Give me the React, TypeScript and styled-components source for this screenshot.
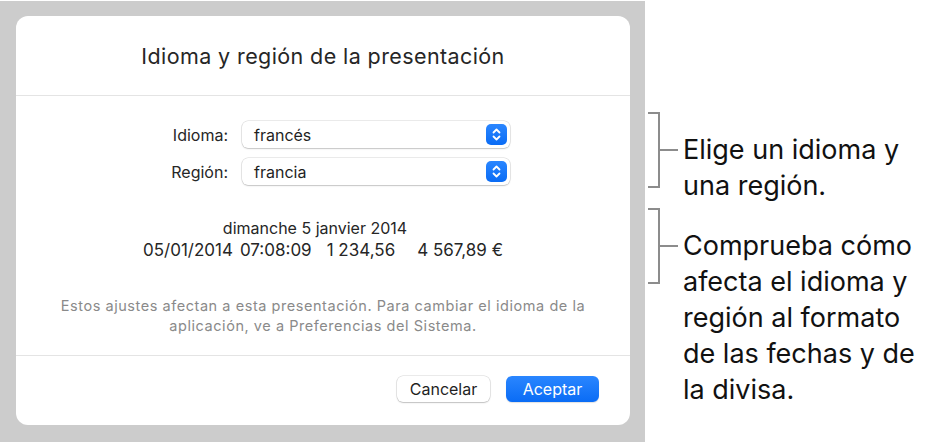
import styled, { createGlobalStyle } from "styled-components";

const GlobalStyle = createGlobalStyle`
  html, body {
    margin: 0;
    padding: 0;
    background: #ffffff;
  }
  body {
    font-family: Inter, "Liberation Sans", sans-serif;
    -webkit-font-smoothing: antialiased;
  }
`;

const Page = styled.div`
  display: flex;
  width: 940px;
  height: 443px;
  padding-top: 1px;
  box-sizing: border-box;
`;

const Stage = styled.div`
  width: 645px;
  height: 441px;
  padding: 15px 0 0 16px;
  box-sizing: border-box;
  background: #cccccc;
`;

const Dialog = styled.div`
  display: flex;
  flex-direction: column;
  width: 614px;
  height: 409px;
  border-radius: 12px;
  background: #ffffff;
`;

const Header = styled.div`
  display: flex;
  align-items: center;
  justify-content: center;
  height: 79px;
  border-bottom: 1px solid #e4e4e4;
  font-size: 21.5px;
  letter-spacing: 0.4px;
  color: #262626;
`;

const Body = styled.div`
  flex: 1;
  display: flex;
  flex-direction: column;
  padding: 25px 0 19px;
`;

const Form = styled.div`
  display: grid;
  grid-template-columns: 200px 268px;
  column-gap: 12px;
  row-gap: 10px;
  align-items: center;
  padding-left: 14px;
`;

const Label = styled.div`
  padding-right: 2px;
  text-align: right;
  font-size: 16px;
  color: #262626;
`;

const Popup = styled.div`
  display: flex;
  align-items: center;
  justify-content: space-between;
  height: 27px;
  padding: 0 3px 0 12px;
  border-radius: 6px;
  background: #ffffff;
  box-shadow: 0 0 0 0.5px rgba(0, 0, 0, 0.16), 0 1px 1.5px rgba(0, 0, 0, 0.16);
  font-size: 16px;
  color: #1f1f1f;
`;

const Stepper = styled.div`
  display: flex;
  align-items: center;
  justify-content: center;
  width: 21px;
  height: 21px;
  border-radius: 5px;
  background: linear-gradient(#2a86ff, #0a6cf5);
`;

const Sample = styled.div`
  display: flex;
  flex-direction: column;
  align-items: center;
  margin-top: 32px;
  line-height: 22px;
  color: #262626;
`;

const SampleLine = styled.div<{ $shift?: number; $size?: number }>`
  display: flex;
  margin-right: ${(p) => p.$shift ?? 0}px;
  font-size: ${(p) => p.$size ?? 16}px;
`;

const SampleItem = styled.span<{ $gap?: number }>`
  margin-left: ${(p) => p.$gap ?? 0}px;
`;

const Note = styled.div`
  margin: auto auto 0;
  width: 560px;
  text-align: center;
  font-size: 14.5px;
  letter-spacing: 0.55px;
  line-height: 20px;
  color: #8a8a8a;
`;

const Footer = styled.div`
  display: flex;
  justify-content: flex-end;
  align-items: flex-start;
  gap: 16px;
  height: 70px;
  padding: 20px 31px 0 0;
  box-sizing: border-box;
  border-top: 1px solid #e4e4e4;
`;

const Button = styled.button<{ $primary?: boolean }>`
  width: 93px;
  height: 26px;
  border: none;
  border-radius: 6px;
  font-family: inherit;
  font-size: 16px;
  color: ${(p) => (p.$primary ? "#ffffff" : "#1f1f1f")};
  background: ${(p) => (p.$primary ? "linear-gradient(#2a86ff, #0a6cf5)" : "#ffffff")};
  box-shadow: ${(p) =>
    p.$primary
      ? "0 1px 1px rgba(0, 0, 0, 0.12)"
      : "0 0 0 0.5px rgba(0, 0, 0, 0.16), 0 1px 1.5px rgba(0, 0, 0, 0.18)"};
`;

const Aside = styled.div`
  display: flex;
  flex-direction: column;
  gap: 4px;
  padding: 111px 0 0 3px;
`;

const Callout = styled.div`
  display: flex;
  align-items: flex-start;
  gap: 5px;
`;

const CalloutText = styled.div`
  margin-top: 20px;
  font-size: 27px;
  line-height: 36px;
  color: #111111;
`;

const Chevrons = () => (
  <svg width="11" height="15" viewBox="0 0 11 15" fill="none">
    <path
      d="M2.5 5.5 L5.5 2.5 L8.5 5.5 M2.5 9.5 L5.5 12.5 L8.5 9.5"
      stroke="#ffffff"
      strokeWidth="1.8"
      strokeLinecap="round"
      strokeLinejoin="round"
    />
  </svg>
);

const Bracket = () => (
  <svg width="30" height="76" viewBox="0 0 30 76" fill="none">
    <path d="M0 1 H11 V75 H0 M11 38 H30" stroke="#8c8c8c" strokeWidth="2" />
  </svg>
);

export default function App() {
  return (
    <>
      <GlobalStyle />
      <Page>
        <Stage>
          <Dialog>
            <Header>Idioma y región de la presentación</Header>
            <Body>
              <Form>
                <Label>Idioma:</Label>
                <Popup>
                  francés
                  <Stepper>
                    <Chevrons />
                  </Stepper>
                </Popup>
                <Label>Región:</Label>
                <Popup>
                  francia
                  <Stepper>
                    <Chevrons />
                  </Stepper>
                </Popup>
              </Form>
              <Sample>
                <SampleLine $shift={16}>dimanche 5 janvier 2014</SampleLine>
                <SampleLine $size={17}>
                  <SampleItem>05/01/2014</SampleItem>
                  <SampleItem $gap={7}>07:08:09</SampleItem>
                  <SampleItem $gap={15}>1 234,56</SampleItem>
                  <SampleItem $gap={22}>4 567,89 €</SampleItem>
                </SampleLine>
              </Sample>
              <Note>
                Estos ajustes afectan a esta presentación. Para cambiar el idioma de la
                aplicación, ve a Preferencias del Sistema.
              </Note>
            </Body>
            <Footer>
              <Button>Cancelar</Button>
              <Button $primary>Aceptar</Button>
            </Footer>
          </Dialog>
        </Stage>
        <Aside>
          <Callout>
            <Bracket />
            <CalloutText>
              Elige un idioma y
              <br />
              una región.
            </CalloutText>
          </Callout>
          <Callout>
            <Bracket />
            <CalloutText>
              Comprueba cómo
              <br />
              afecta el idioma y
              <br />
              región al formato
              <br />
              de las fechas y de
              <br />
              la divisa.
            </CalloutText>
          </Callout>
        </Aside>
      </Page>
    </>
  );
}
